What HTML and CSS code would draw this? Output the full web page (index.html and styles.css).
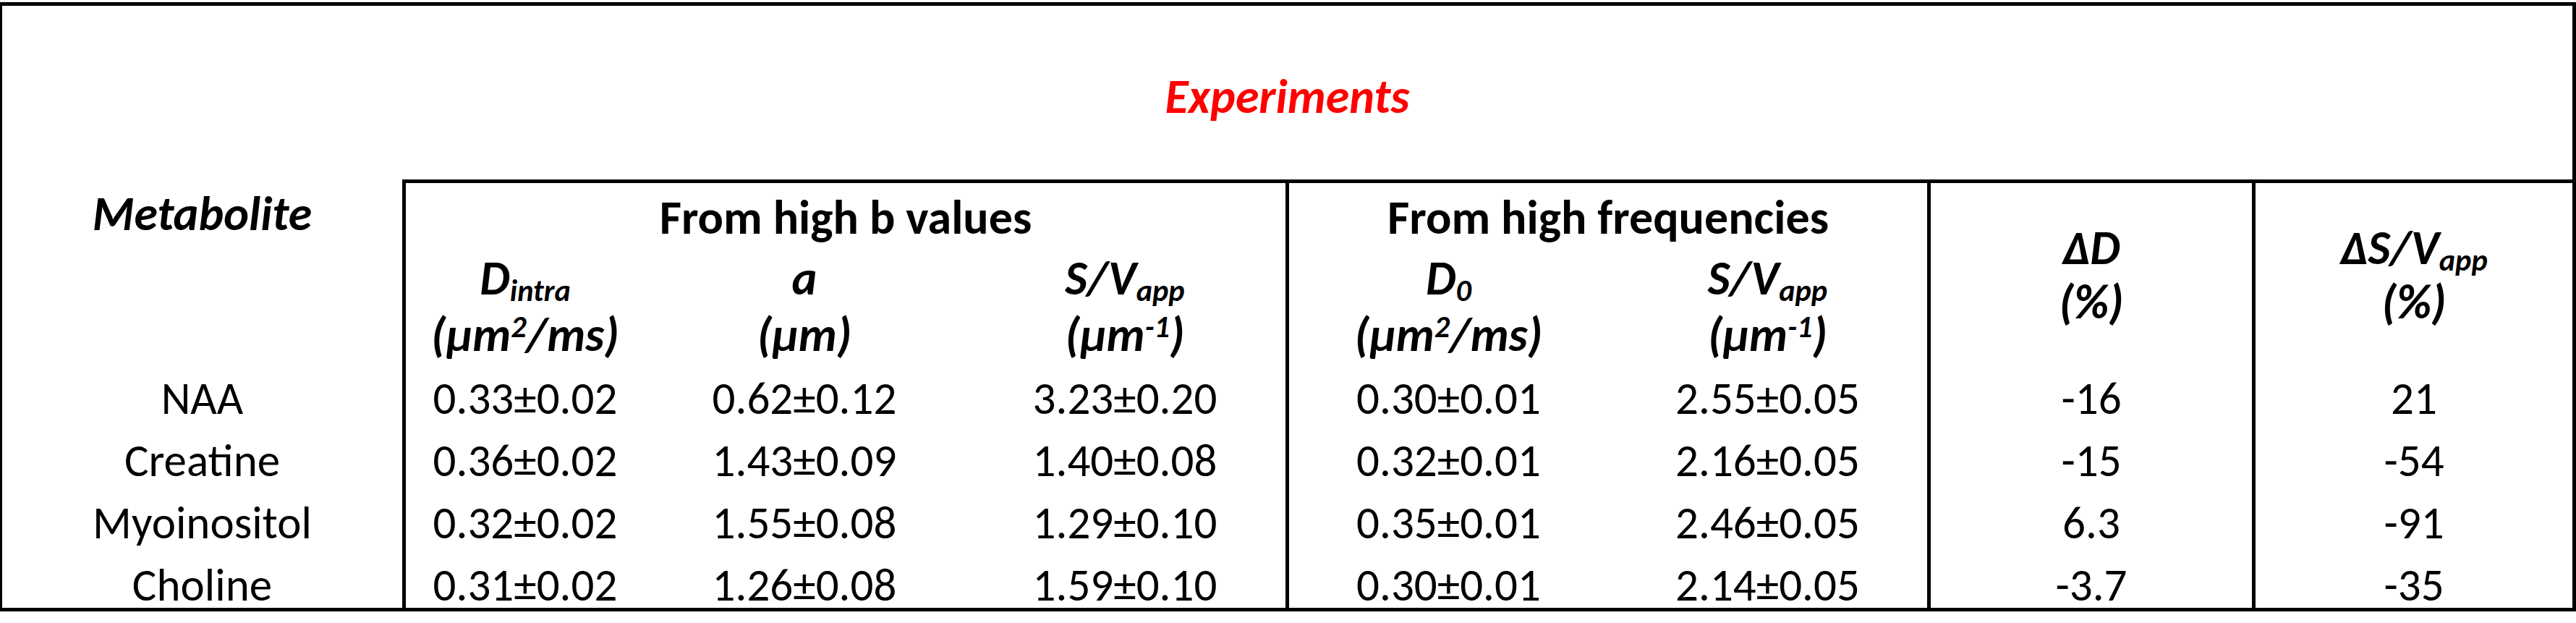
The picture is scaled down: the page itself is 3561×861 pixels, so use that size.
FILE: index.html
```html
<!DOCTYPE html>
<html>
<head>
  <title>Experiments - Metabolite diffusion</title>
  <link rel="stylesheet" href="styles.css">
</head>
<body>
  <div class="sheet">
    <div class="title">Experiments</div>

    <div class="head metab">Metabolite</div>
    <div class="head group group-b sep">From high b values</div>
    <div class="head group group-f sep">From high frequencies</div>
    <div class="delta delta-d sep">&Delta;D<br>(%)</div>
    <div class="delta delta-sv sep">&Delta;S/V<sub>app</sub><br>(%)</div>

    <div class="sub"></div>
    <div class="sub sep">D<sub>intra</sub><br>(&mu;m<sup>2</sup>/ms)</div>
    <div class="sub">a<br>(&mu;m)</div>
    <div class="sub">S/V<sub>app</sub><br>(&mu;m<sup>-1</sup>)</div>
    <div class="sub sep">D<sub>0</sub><br>(&mu;m<sup>2</sup>/ms)</div>
    <div class="sub">S/V<sub>app</sub><br>(&mu;m<sup>-1</sup>)</div>

    <!-- data rows -->
    <div class="cell">NAA</div>
    <div class="cell sep">0.33&plusmn;0.02</div>
    <div class="cell">0.62&plusmn;0.12</div>
    <div class="cell">3.23&plusmn;0.20</div>
    <div class="cell sep">0.30&plusmn;0.01</div>
    <div class="cell">2.55&plusmn;0.05</div>
    <div class="cell sep">-16</div>
    <div class="cell sep">21</div>

    <div class="cell">Creatine</div>
    <div class="cell sep">0.36&plusmn;0.02</div>
    <div class="cell">1.43&plusmn;0.09</div>
    <div class="cell">1.40&plusmn;0.08</div>
    <div class="cell sep">0.32&plusmn;0.01</div>
    <div class="cell">2.16&plusmn;0.05</div>
    <div class="cell sep">-15</div>
    <div class="cell sep">-54</div>

    <div class="cell">Myoinositol</div>
    <div class="cell sep">0.32&plusmn;0.02</div>
    <div class="cell">1.55&plusmn;0.08</div>
    <div class="cell">1.29&plusmn;0.10</div>
    <div class="cell sep">0.35&plusmn;0.01</div>
    <div class="cell">2.46&plusmn;0.05</div>
    <div class="cell sep">6.3</div>
    <div class="cell sep">-91</div>

    <div class="cell">Choline</div>
    <div class="cell sep">0.31&plusmn;0.02</div>
    <div class="cell">1.26&plusmn;0.08</div>
    <div class="cell">1.59&plusmn;0.10</div>
    <div class="cell sep">0.30&plusmn;0.01</div>
    <div class="cell">2.14&plusmn;0.05</div>
    <div class="cell sep">-3.7</div>
    <div class="cell sep">-35</div>
  </div>
</body>
</html>
```

FILE: styles.css
```css
/* table of metabolite diffusion results */
body {
  margin: 0;
  padding: 0;
  background-color: #fff;
  font-family: Carlito, Calibri, "Liberation Sans Narrow", "Liberation Sans", sans-serif;
  color: #000;
}

.sheet {
  display: grid;
  grid-template-columns: 553px 335px 442px 444px 446px 441px 449px 443px;
  grid-template-rows: 240px 92px 156px repeat(4, 86px);
  width: 3561px;
  box-sizing: border-box;
  margin-top: 3px;
  border: 5px solid #000;
  border-left-width: 3px;
}

.sheet > div {
  box-sizing: border-box;
  text-align: center;
  font-size: 66px;
}

.sep {
  border-left: 5px solid #000;
}

.title {
  grid-column: 1 / 9;
  color: #ff0000;
  font-weight: bold;
  font-style: italic;
  line-height: 80px;
  padding-top: 86px;
}

.head {
  font-weight: bold;
  line-height: 76px;
  padding-top: 10px;
}

.metab {
  font-style: italic;
}

.group {
  border-top: 5px solid #000;
}

.group-b {
  grid-column: 2 / 5;
}

.group-f {
  grid-column: 5 / 7;
}

.delta {
  grid-row: 2 / 4;
  border-top: 5px solid #000;
  font-weight: bold;
  font-style: italic;
  line-height: 75px;
  padding-top: 52px;
}

.delta-d {
  grid-column: 7;
}

.delta-sv {
  grid-column: 8;
}

.sub {
  font-weight: bold;
  font-style: italic;
  line-height: 78px;
  padding-top: 6px;
}

sub,
sup {
  line-height: 0;
  font-size: 0.64em;
}

sub {
  vertical-align: -0.22em;
}

sup {
  vertical-align: 0.45em;
}

.sheet > .cell {
  font-size: 63px;
  line-height: 86px;
  padding-top: 12px;
}
```
